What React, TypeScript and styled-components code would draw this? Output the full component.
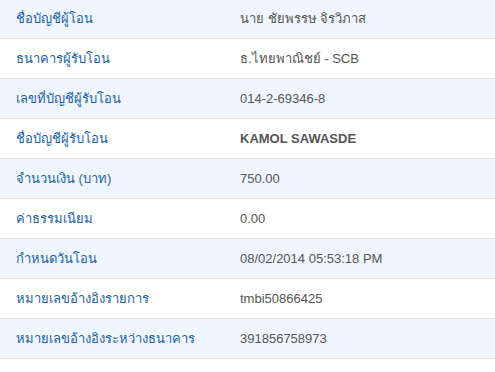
import React from "react";
import styled, { createGlobalStyle } from "styled-components";

type Detail = {
  label: string;
  value: string;
  strong?: boolean;
};

const details: Detail[] = [
  { label: "ชื่อบัญชีผู้โอน", value: "นาย ชัยพรรษ จิรวิภาส" },
  { label: "ธนาคารผู้รับโอน", value: "ธ.ไทยพาณิชย์ - SCB" },
  { label: "เลขที่บัญชีผู้รับโอน", value: "014-2-69346-8" },
  { label: "ชื่อบัญชีผู้รับโอน", value: "KAMOL SAWASDE", strong: true },
  { label: "จำนวนเงิน (บาท)", value: "750.00" },
  { label: "ค่าธรรมเนียม", value: "0.00" },
  { label: "กำหนดวันโอน", value: "08/02/2014 05:53:18 PM" },
  { label: "หมายเลขอ้างอิงรายการ", value: "tmbi50866425" },
  { label: "หมายเลขอ้างอิงระหว่างธนาคาร", value: "391856758973" },
  { label: "บันทึกช่วยจำ", value: "" },
];

const GlobalStyle = createGlobalStyle`
  body {
    margin: 0;
    background: #ffffff;
    font-family: "Liberation Sans", Arial, "Noto Sans", sans-serif;
    font-size: 13px;
  }
`;

const Table = styled.div`
  display: flex;
  flex-direction: column;
  width: 495px;
  margin-top: -1px;
`;

const Row = styled.div<{ $striped: boolean }>`
  display: grid;
  grid-template-columns: 240px 1fr;
  height: 39px;
  align-items: center;
  border-bottom: 1px solid #dddddd;
  background: ${({ $striped }) => ($striped ? "#eff6fd" : "#ffffff")};
`;

const Label = styled.div`
  padding-left: 16px;
  color: #1d5fa3;
`;

const Value = styled.div<{ $strong?: boolean }>`
  color: #555555;
  font-weight: ${({ $strong }) => ($strong ? "bold" : "normal")};
`;

const App = () => (
  <>
    <GlobalStyle />
    <Table>
      {details.map((d, i) => (
        <Row key={d.label} $striped={i % 2 === 0}>
          <Label>{d.label}</Label>
          <Value $strong={d.strong}>{d.value}</Value>
        </Row>
      ))}
    </Table>
  </>
);

export default App;
